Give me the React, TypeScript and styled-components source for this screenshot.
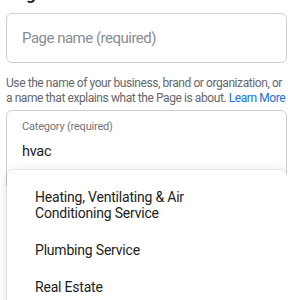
import { createGlobalStyle, styled } from "styled-components";

const GlobalStyle = createGlobalStyle`
  html, body {
    margin: 0;
    padding: 0;
    background: #ffffff;
    overflow: hidden;
  }
  body {
    font-family: Roboto, "Liberation Sans", Arial, sans-serif;
    color: #1c1e21;
  }
`;

const Page = styled.div`
  display: flex;
  flex-direction: column;
  width: 281px;
  padding-left: 6px;
  height: 300px;
  overflow: hidden;
`;

const Heading = styled.h2`
  margin: -16px 0 9px 0;
  font-size: 17px;
  line-height: 20px;
  font-weight: 700;
  color: #1c1e21;
`;

const TextBox = styled.div`
  display: flex;
  align-items: center;
  height: 48px;
  padding: 0 15px;
  border: 1px solid #ccd0d5;
  border-radius: 6px;
  font-size: 15px;
  letter-spacing: -0.5px;
  color: #8a8d91;
`;

const Helper = styled.p`
  margin: 13px 0 0 0;
  font-size: 12px;
  line-height: 15px;
  letter-spacing: -0.42px;
  color: #65676b;
  white-space: nowrap;

  a {
    color: #216fdb;
    text-decoration: none;
  }
`;

const CategoryWrap = styled.div`
  position: relative;
  margin-top: 4px;
`;

const CategoryBox = styled.div`
  display: flex;
  flex-direction: column;
  height: 70px;
  padding: 8px 15px 0;
  border: 1px solid #ccd0d5;
  border-radius: 6px;
`;

const Label = styled.span`
  font-size: 11px;
  line-height: 16px;
  letter-spacing: -0.2px;
  color: #737579;
`;

const Value = styled.span`
  margin-top: 7px;
  font-size: 14.5px;
  line-height: 20px;
  letter-spacing: -0.3px;
  color: #1c1e21;
`;

const Menu = styled.ul`
  position: absolute;
  top: 60px;
  left: 1px;
  right: 0;
  margin: 0;
  padding: 8px 0 0;
  list-style: none;
  background: #ffffff;
  border-radius: 6px;
  box-shadow: 0 2px 12px rgba(0, 0, 0, 0.15), 0 0 0 1px rgba(0, 0, 0, 0.05);
  height: 200px;
`;

const Item = styled.li`
  padding: 11px 28px 10px;
  font-size: 14px;
  line-height: 16px;
  letter-spacing: -0.2px;
  color: #1c1e21;
`;

export default function App() {
  const options = [
    ["Heating, Ventilating & Air", "Conditioning Service"],
    ["Plumbing Service"],
    ["Real Estate"],
  ];

  return (
    <>
      <GlobalStyle />
      <Page>
        <Heading>Page information</Heading>
        <TextBox>Page name (required)</TextBox>
        <Helper>
          Use the name of your business, brand or organization, or
          <br />
          a name that explains what the Page is about. <a href="#">Learn More</a>
        </Helper>
        <CategoryWrap>
          <CategoryBox>
            <Label>Category (required)</Label>
            <Value>hvac</Value>
          </CategoryBox>
          <Menu>
            {options.map((lines) => (
              <Item key={lines[0]}>
                {lines.map((l, i) => (
                  <span key={l}>
                    {i > 0 && <br />}
                    {l}
                  </span>
                ))}
              </Item>
            ))}
          </Menu>
        </CategoryWrap>
      </Page>
    </>
  );
}
